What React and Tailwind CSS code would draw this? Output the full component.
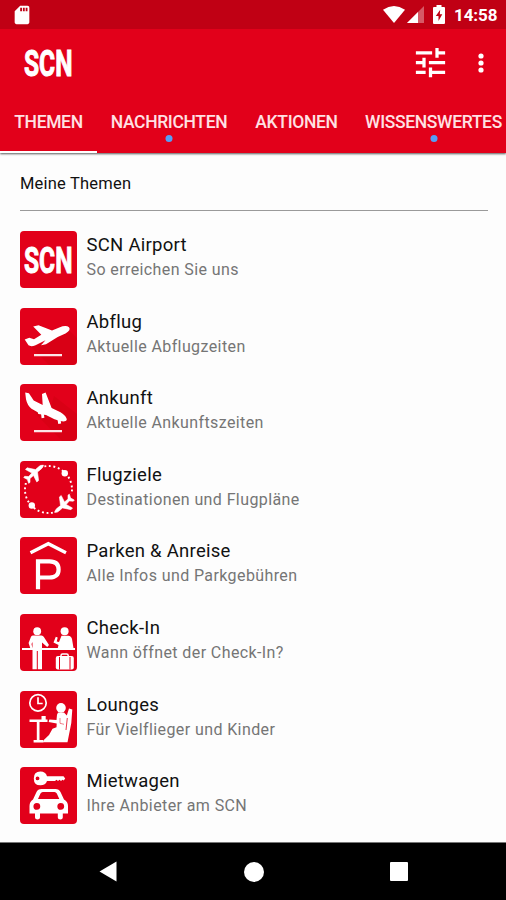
import { MdSdCard, MdTune } from "react-icons/md"

function ScnMark() {
  return (
    <div className="flex h-[57px] w-[57px] items-center justify-center">
      <ScnText />
    </div>
  )
}

function ScnText() {
  return (
    <svg viewBox="0 0 55 56" className="h-[56px] w-[55px]" fill="#fff">
      <text
        x="3"
        y="40.5"
        textLength="48.5"
        lengthAdjust="spacingAndGlyphs"
        stroke="#fff"
        strokeWidth="1"
        className="font-['Roboto',sans-serif] text-[37px] font-bold"
      >
        SCN
      </text>
    </svg>
  )
}

function DepartureIcon() {
  return (
    <svg viewBox="0 0 57 57" className="h-[57px] w-[57px]" fill="#fff">
      <path d="M9 37 29 57H57V30L49 22 26 35Z" fill="#c8000f" opacity=".35" />
      <path d="M4.7 31.5 9.3 29.8 14 31.3 21.3 26.7 13.2 18.5 18.5 17.2 32 22.4 39.3 19.5Q46 16.8 49 19.3 51.3 22 45.5 25.6L37.7 29 26 36.3 21 37.2 25.5 32.3 15.5 37.2Q11 39 8.5 37.3Z" />
      <path d="M14 45.9h28v2.3H14z" opacity=".9" />
    </svg>
  )
}

function ArrivalIcon() {
  return (
    <svg viewBox="0 0 57 57" className="h-[57px] w-[57px]" fill="#fff">
      <path d="M9 23 42 57H57V30L34 12 30 26Z" fill="#c8000f" opacity=".35" />
      <path d="M5.2 8.5 8.9 9.3 13.7 16.6 22.7 21 22 10 25.6 8.6 31.6 23.9 40.5 28.2Q47 32.3 46.8 36 45.8 38.2 40 37L34.5 35.2 26 31 18.3 30 17.7 28.2 11.5 24.7Q7.3 21.5 6 15.3Z" />
      <path d="m21 29 .6 5.2 2.8-.5-.6-4M37.5 35.5l.8 4.5 2.8-.4-.5-4" />
      <path d="M14 45.9h28v2.3H14z" opacity=".9" />
    </svg>
  )
}

function DestinationsIcon() {
  return (
    <svg viewBox="0 0 57 57" className="h-[57px] w-[57px]" fill="#fff">
      <circle cx="28.5" cy="28.5" r="23.5" fill="none" stroke="#fff" strokeWidth="1.9" strokeDasharray="1.9 2.7" />
      <path d="M2 2h22v20H2zM34 33h21v22H34z" fill="#e2001a" />
      <Jet />
      <g transform="translate(58 55.5) rotate(180)">
        <Jet />
      </g>
      <circle cx="44.8" cy="12.2" r="3.2" />
      <circle cx="11.8" cy="44.5" r="3.2" />
    </svg>
  )
}

function Jet() {
  return (
    <path
      d="M23.5 4.2Q20.5 3.5 17.8 6.5L15.5 8.6 7 6.8 5.5 8.5 11.8 12 8.7 15.6 4.7 15.3 3.7 16.5 7.4 18.5 8.6 22.3 10 21.4 10 17.5 13.5 14.5 16.8 21 18.6 19.5 17.5 11Q23.5 6.8 23.5 4.2Z"
      stroke="#fff"
      strokeWidth=".6"
    />
  )
}

function ParkingIcon() {
  return (
    <svg viewBox="0 0 57 57" className="h-[57px] w-[57px]" fill="none" stroke="#fff">
      <path d="M10.5 15.7 28.3 6.7 46 15.7" strokeWidth="3.4" />
      <path d="M18 52.3V24.3H29.5Q38.6 24.3 38.6 32.4T29.5 40.5H18" strokeWidth="4.2" />
    </svg>
  )
}

function CheckInIcon() {
  return (
    <svg viewBox="0 0 57 57" className="h-[57px] w-[57px]" fill="#fff">
      <path d="M2 34h53v2H2z" />
      <circle cx="17.2" cy="17.2" r="3.9" />
      <path d="M12.8 21.5h8.7Q23.2 21.6 24 23.2L29 31 27.2 33 22 28.5V55.3H17.8V37h-1V55.3H12.5V28L11.5 30 12.8 35.5 10.8 35.8 8.6 29 10.8 23.2Q11.3 21.6 12.8 21.5Z" />
      <circle cx="44.6" cy="17.2" r="4" />
      <path d="M41.5 21.8h6.8Q51.3 22 52 25L53.5 34H37.8L38.5 31 33.5 28.5 35.8 22.8 37.7 23.6 36.7 27.5 39 28Z" />
      <path d="M41 43v-1.6q0-1.5 1.6-1.5h4q1.6 0 1.6 1.5V43" fill="none" stroke="#fff" strokeWidth="1.5" />
      <rect x="35.8" y="42" width="18" height="13.5" rx="2" />
      <path d="M39.5 43v12.5M50 43v12.5" stroke="#e2001a" strokeWidth="1" />
    </svg>
  )
}

function LoungeIcon() {
  return (
    <svg viewBox="0 0 57 57" className="h-[57px] w-[57px]" fill="#fff">
      <circle cx="18" cy="11.9" r="8.2" fill="none" stroke="#fff" strokeWidth="1.7" />
      <path d="M18 6.3v6.2h4.7" fill="none" stroke="#fff" strokeWidth="1.7" />
      <path d="M9.5 28.4h12V25h4.2v3.4h1.8V31h-8V49h3.8v2.4H13.6V49h3.2V31H9.5z" />
      <circle cx="41" cy="16.9" r="4.8" />
      <path d="M38 21.5H44L46.8 24.5 49 17.6 52.3 18.5 51.3 32 47.5 51.3H22.8L23.8 49 29 44 32.5 37.8 36.5 36.3 36.7 32.5 28.7 31 29.3 28.5 36.5 29 37 23.8Z" />
      <path d="M47.3 27l-1.3 12" fill="none" stroke="#e2001a" strokeWidth=".8" />
      <path d="M40 27v5.3l4 1" fill="none" stroke="#e2001a" strokeWidth=".5" />
    </svg>
  )
}

function RentalCarIcon() {
  return (
    <svg viewBox="0 0 57 57" className="h-[57px] w-[57px]" fill="#fff">
      <path
        fillRule="evenodd"
        d="M20.5 4.6Q25.5 4.6 27 9.2H43.5L45.2 11.5 43.7 13.6 42.5 12.7 41 14 39.5 12.7 38 14 36.5 12.7 35 13.9H27Q25.5 18.3 20.5 18.3 13.8 18.3 13.8 11.4T20.5 4.6ZM17.5 9.5a1.9 1.9 0 1 0 .1 3.8 1.9 1.9 0 0 0-.1-3.8Z"
      />
      <path
        fillRule="evenodd"
        d="M13 32.5 16.5 25Q17.8 22 21.5 22H35.5Q39 22 40.5 25L44 32.5Q48 34.5 48 39V46.5H42.8V50.5Q42.8 52.5 40.3 52.5T37.8 50.5V46.5H20V50.5Q20 52.5 17.5 52.5T15 50.5V46.5H9.5V39Q9.5 34.5 13 32.5ZM18 32H39.3L36.8 26.5Q36 25 34.5 25H22.8Q21.3 25 20.5 26.5ZM16.8 36a3.4 3.4 0 1 0 .1 6.8 3.4 3.4 0 0 0-.1-6.8ZM40.7 36a3.4 3.4 0 1 0 .1 6.8 3.4 3.4 0 0 0-.1-6.8Z"
      />
    </svg>
  )
}

const TABS = [
  { label: "THEMEN", className: "w-[97px]", active: true },
  { label: "NACHRICHTEN", className: "w-[144px]", dot: true },
  { label: "AKTIONEN", className: "w-[111px]" },
  { label: "WISSENSWERTES", className: "w-[163px]", dot: true },
]

const TOPICS = [
  { title: "SCN Airport", text: "So erreichen Sie uns", Icon: ScnMark },
  { title: "Abflug", text: "Aktuelle Abflugzeiten", Icon: DepartureIcon },
  { title: "Ankunft", text: "Aktuelle Ankunftszeiten", Icon: ArrivalIcon },
  { title: "Flugziele", text: "Destinationen und Flugpläne", Icon: DestinationsIcon },
  { title: "Parken & Anreise", text: "Alle Infos und Parkgebühren", Icon: ParkingIcon },
  { title: "Check-In", text: "Wann öffnet der Check-In?", Icon: CheckInIcon },
  { title: "Lounges", text: "Für Vielflieger und Kinder", Icon: LoungeIcon },
  { title: "Mietwagen", text: "Ihre Anbieter am SCN", Icon: RentalCarIcon },
]

function StatusBar() {
  return (
    <div className="flex h-[29px] items-center bg-[#c00014] pl-[11px] pr-[9px]">
      <MdSdCard className="h-[22px] w-[22px]" />
      <div className="ml-auto flex items-center">
        <svg viewBox="0 0 22 17" className="mr-[2px] h-[17px] w-[22px]" fill="#fff">
          <path d="M0 3.8Q11-3.6 22 3.8L11 17Z" />
        </svg>
        <svg viewBox="0 0 17 17" className="mr-[9px] h-[17px] w-[17px]" fill="#fff">
          <path d="M17 0V17H0Z" opacity=".35" />
          <path d="M11 6V17H0Z" />
        </svg>
        <svg viewBox="0 0 12 19" className="mr-[9px] h-[19px] w-[12px]">
          <path d="M3.5 0h5v2H11q1 0 1 1v15q0 1-1 1H1q-1 0-1-1V3q0-1 1-1h2.5z" fill="#fff" />
          <path d="M7.2 4.8 2.8 11h2.7v5L9.3 9.3H6.8z" fill="#c00014" />
        </svg>
        <span className="w-[43px] pt-[1px] text-[17px] font-bold leading-none tracking-[-0.1px]">14:58</span>
      </div>
    </div>
  )
}

function Header() {
  return (
    <header className="relative h-[153px] shrink-0 bg-[#e2001a] text-white shadow-[0_1px_2px_rgba(0,0,0,0.65)]">
      <StatusBar />
      <div className="flex h-[67px] items-center pl-[21px] pr-[22px]">
        <ScnText />
        <MdTune className="ml-auto h-[39px] w-[39px]" />
        <svg viewBox="0 0 6 20" className="ml-[28px] h-[20px] w-[6px]" fill="#fff">
          <circle cx="3" cy="3" r="2.6" />
          <circle cx="3" cy="10" r="2.6" />
          <circle cx="3" cy="17" r="2.6" />
        </svg>
      </div>
      <nav className="flex h-[57px] w-[515px] text-[17.5px] font-medium tracking-[-0.35px] text-[#ffe1e4]">
        {TABS.map((tab) => (
          <button
            key={tab.label}
            className={`relative shrink-0 whitespace-nowrap border-b-2 pb-[2px] text-center ${tab.className} ${tab.active ? "border-white" : "border-transparent"}`}
          >
            {tab.label}
            {tab.dot && (
              <span className="absolute bottom-[9px] left-1/2 h-[7px] w-[7px] -translate-x-1/2 rounded-full bg-[#559ff5]" />
            )}
          </button>
        ))}
      </nav>
    </header>
  )
}

function TopicRow({ title, text, Icon }) {
  return (
    <li className="flex h-[76.6px] items-start">
      <div className="h-[57px] w-[57px] shrink-0 overflow-hidden rounded-[4px] bg-[#e2001a]">
        <Icon />
      </div>
      <div className="pl-[9.5px] pt-[2px]">
        <div className="text-[18.5px] leading-[24px] tracking-[0.27px] text-[#111]">{title}</div>
        <div className="text-[16px] leading-[25px] tracking-[0.4px] text-[#757575]">{text}</div>
      </div>
    </li>
  )
}

function NavBar() {
  return (
    <div className="flex h-[58px] shrink-0 items-center justify-between border-t border-[#777] bg-black pl-[99px] pr-[98px]">
      <svg viewBox="0 0 18 21" className="h-[21px] w-[18px]" fill="#fff">
        <path d="M.5 10.5 17.5.5v20z" />
      </svg>
      <div className="h-[20px] w-[20px] rounded-full bg-white" />
      <div className="h-[19px] w-[18px] rounded-[1px] bg-white" />
    </div>
  )
}

export default function App() {
  return (
    <div className="flex h-[900px] w-[506px] flex-col overflow-hidden bg-[#fdfdfd] font-['Roboto',sans-serif]">
      <Header />
      <main className="min-h-0 flex-1 pl-[20px] pr-[18px]">
        <h2 className="h-[58px] border-b-[1.5px] border-[#9a9a9a] pt-[19px] text-[16.5px] leading-[24px] tracking-[0.2px] text-[#111]">
          Meine Themen
        </h2>
        <ul className="pt-[20px]">
          {TOPICS.map((topic) => (
            <TopicRow key={topic.title} {...topic} />
          ))}
        </ul>
      </main>
      <NavBar />
    </div>
  )
}
